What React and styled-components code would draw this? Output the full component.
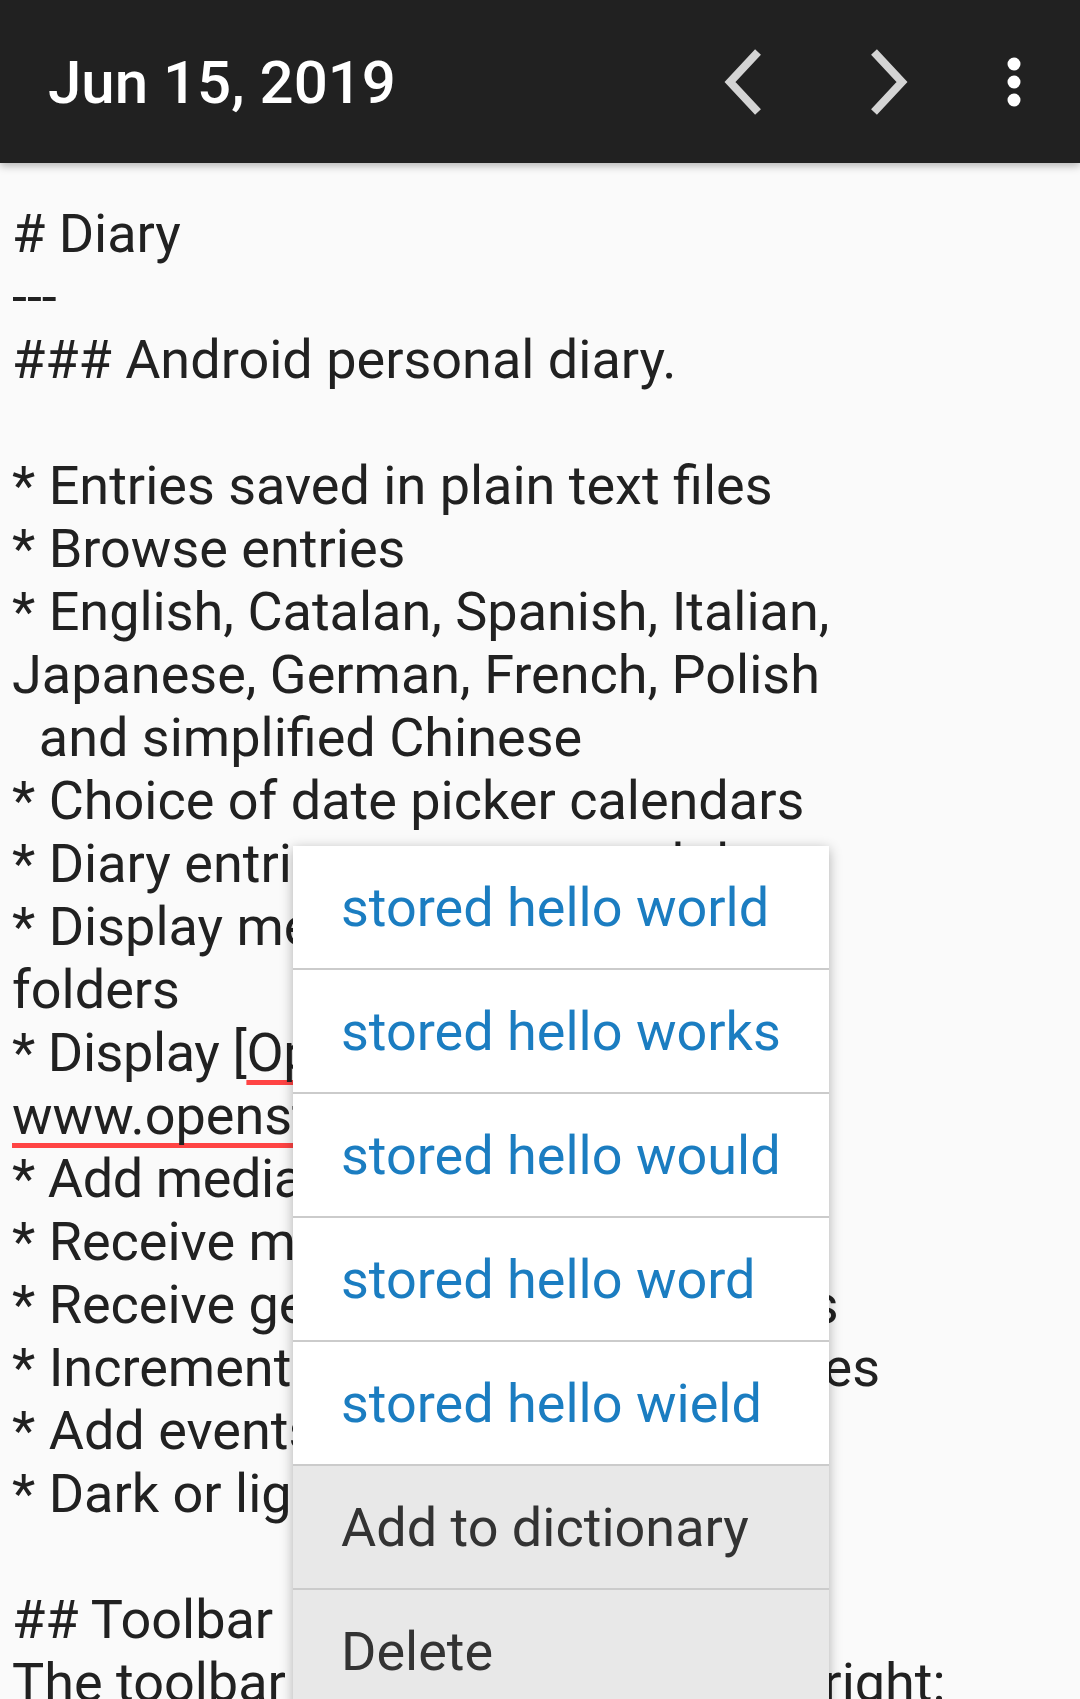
import React from 'react';
import styled, { createGlobalStyle } from 'styled-components';

const Global = createGlobalStyle`
  html, body {
    margin: 0;
    padding: 0;
    overflow: hidden;
    background: #fafafa;
  }
`;

const S = {};
S.Screen = styled.div`
  position: relative;
  width: 1080px;
  height: 1699px;
  overflow: hidden;
  background: #fafafa;
  font-family: Roboto, 'Liberation Sans', sans-serif;
`;
S.Toolbar = styled.header`
  position: relative;
  z-index: 2;
  display: flex;
  align-items: center;
  height: 163px;
  padding: 0 12px 0 48px;
  background: #212121;
  box-shadow: 0 3px 8px rgba(0, 0, 0, 0.28);
`;
S.Title = styled.h1`
  flex: 1;
  margin: 0;
  color: #ffffff;
  font-size: 60px;
  font-weight: 500;
  line-height: 1;
  padding-top: 2px;
`;
S.IconButton = styled.div`
  display: flex;
  align-items: center;
  justify-content: center;
  width: ${(p) => p.$w || 144}px;
  height: 163px;
`;
S.Editor = styled.div`
  padding: 39px 12px 0 12px;
  color: #212121;
  font-size: 54px;
  line-height: 63px;
  white-space: pre;
`;
S.Line = styled.div`
  min-height: 63px;
  letter-spacing: ${(p) => (p.$tight ? '-0.4px' : 'normal')};
`;
S.Misspelled = styled.span`
  text-decoration: underline;
  text-decoration-color: #ff4444;
  text-decoration-thickness: 5px;
  text-underline-offset: 9px;
  text-decoration-skip-ink: none;
`;
S.Menu = styled.ul`
  position: absolute;
  left: 293px;
  top: 846px;
  width: 536px;
  margin: 0;
  padding: 0;
  list-style: none;
  background: #ffffff;
  box-shadow: 0 3px 12px rgba(0, 0, 0, 0.3);
  z-index: 3;
`;
S.Item = styled.li`
  display: flex;
  align-items: center;
  height: 122px;
  padding-left: 48px;
  border-bottom: 2px solid #cbcbcb;
  font-size: 54px;
  color: ${(p) => (p.$suggestion ? '#1b7dc1' : '#333333')};
  background: ${(p) => (p.$suggestion ? '#ffffff' : '#e8e8e8')};
`;

const Chevron = ({ dir }) => (
  <svg width="40" height="66" viewBox="0 0 40 66">
    <polyline
      points={dir === 'left' ? '34,3 6,33 34,63' : '6,3 34,33 6,63'}
      fill="none"
      stroke="#d4d4d4"
      strokeWidth="8"
      strokeLinejoin="miter"
    />
  </svg>
);

const Overflow = () => (
  <svg width="14" height="50" viewBox="0 0 14 50">
    <circle cx="7" cy="7" r="6.5" fill="#fff" />
    <circle cx="7" cy="25" r="6.5" fill="#fff" />
    <circle cx="7" cy="43" r="6.5" fill="#fff" />
  </svg>
);

// lines whose right end would otherwise peek past the popup are marked tight
const lines = [
  ['# Diary'],
  ['---'],
  ['### Android personal diary.'],
  [''],
  ['* Entries saved in plain text files'],
  ['* Browse entries'],
  ['* English, Catalan, Spanish, Italian,'],
  ['Japanese, German, French, Polish'],
  ['  and simplified Chinese'],
  ['* Choice of date picker calendars'],
  ['* Diary entries may use markdown'],
  ['* Display media stored in diary'],
  ['folders'],
  [
    <>
      * Display [<S.Misspelled>OpenStreetMap</S.Misspelled>](https://
    </>,
    true,
  ],
  [
    <>
      <S.Misspelled>www.openstreetmap.org</S.Misspelled>) maps
    </>,
  ],
  ['* Add media from media providers', true],
  ['* Receive media from other apps'],
  ['* Receive geo uris from other apps'],
  ['* Incremental search of diary entries'],
  ['* Add events to calendar'],
  ['* Dark or light theme for editing'],
  [''],
  ['## Toolbar'],
  ['The toolbar icons are, from left to right:'],
];

const suggestions = [
  'stored hello world',
  'stored hello works',
  'stored hello would',
  'stored hello word',
  'stored hello wield',
];

export default function App() {
  return (
    <S.Screen>
      <Global />
      <S.Toolbar>
        <S.Title>Jun 15, 2019</S.Title>
        <S.IconButton>
          <Chevron dir="left" />
        </S.IconButton>
        <S.IconButton>
          <Chevron dir="right" />
        </S.IconButton>
        <S.IconButton $w={108}>
          <Overflow />
        </S.IconButton>
      </S.Toolbar>
      <S.Editor>
        {lines.map(([text, tight], i) => (
          <S.Line key={i} $tight={tight}>
            {text}
          </S.Line>
        ))}
      </S.Editor>
      <S.Menu>
        {suggestions.map((s) => (
          <S.Item key={s} $suggestion>
            {s}
          </S.Item>
        ))}
        <S.Item>Add to dictionary</S.Item>
        <S.Item>Delete</S.Item>
      </S.Menu>
    </S.Screen>
  );
}
